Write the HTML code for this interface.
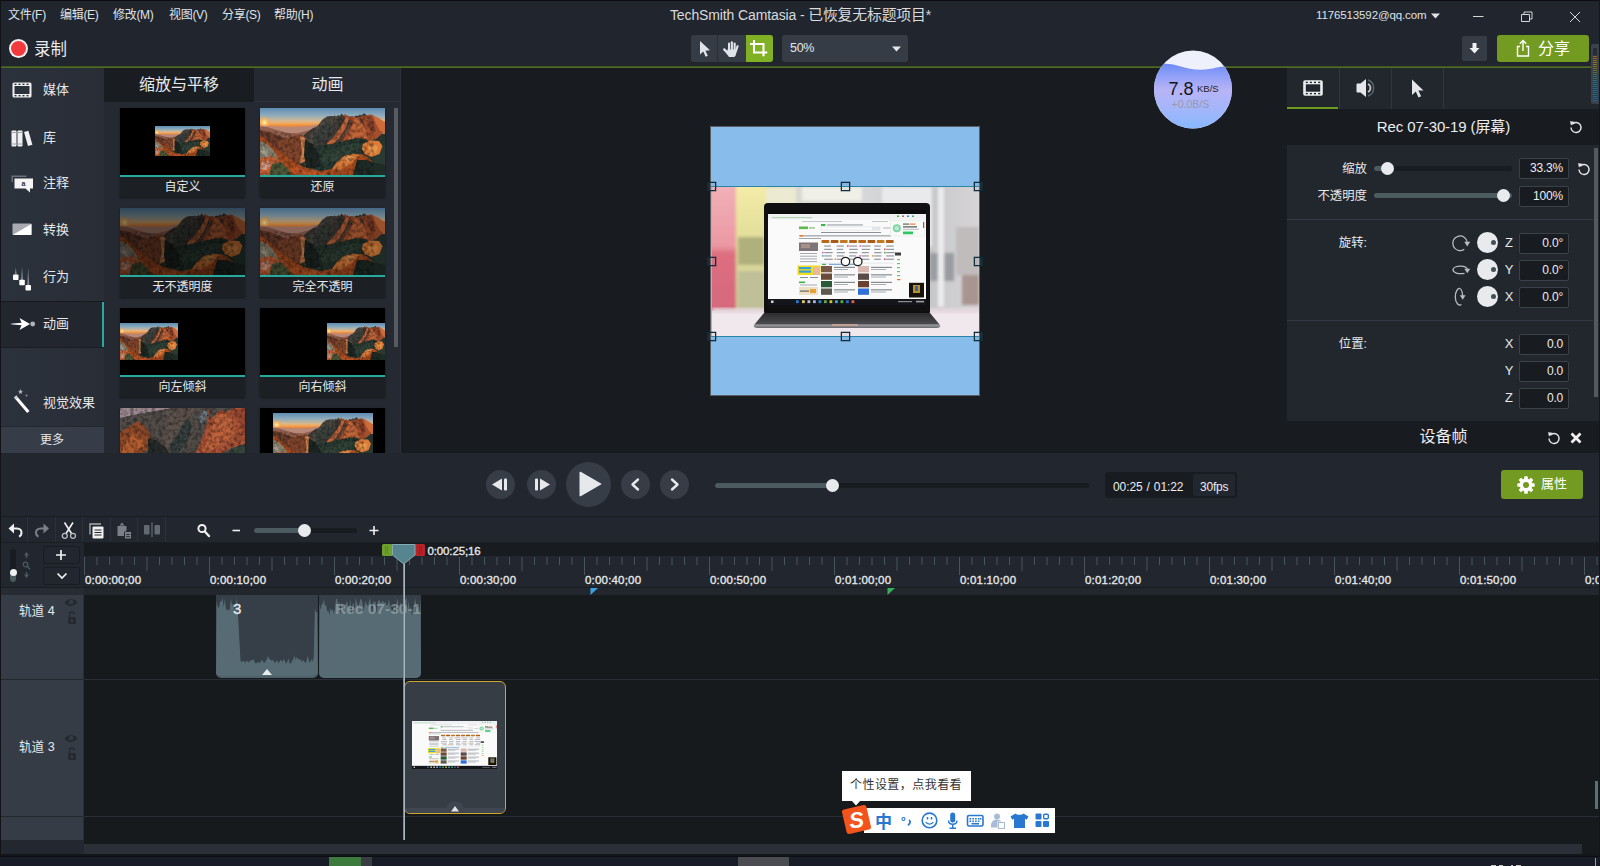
<!DOCTYPE html>
<html lang="zh-CN">
<head>
<meta charset="utf-8">
<title>TechSmith Camtasia - 已恢复无标题项目*</title>
<style>
*{box-sizing:border-box;margin:0;padding:0}
html,body{width:1600px;height:866px;overflow:hidden;background:#21252e}
body{position:relative;font-family:"Liberation Sans","Noto Sans CJK SC",sans-serif;color:#e4e6e8;font-size:13px}
.abs{position:absolute}
#app{position:absolute;left:0;top:0;width:1600px;height:866px;overflow:hidden;background:#21252e}
/* top */
#topbar{left:0;top:0;width:1600px;height:66px;background:#21252e;border-top:1px solid #0b0d10}
#greenline{left:0;top:66px;width:1600px;height:2px;background:linear-gradient(180deg,#40561f 0,#40561f 50%,#506c24 50%,#506c24 100%)}
.menu{top:6px;font-size:12px;color:#dfe2e5;white-space:nowrap;line-height:16px;letter-spacing:-.3px}
#title{left:0;width:1601px;text-align:center;top:4.500px;font-size:14px;color:#d8dbde;line-height:18px;letter-spacing:-.12px}
/* sidebar */
#sidebar{left:0;top:68px;width:104px;height:385px;background:linear-gradient(90deg,#2c323c,#282d36)}
.sitem{left:0;width:104px;height:46px;}
.sitem span{position:absolute;left:43px;top:14px;font-size:13px;line-height:18px;color:#e6e8ea;white-space:nowrap}

#email{left:1316px;top:6px;font-size:11.500px;line-height:16px;color:#dfe2e5;letter-spacing:-0.12px}
.sact{background:#22262e;border-top:1px solid #15181c;border-bottom:1px solid #1a1d23}
.sact:after{content:"";position:absolute;right:0;top:0;width:2px;height:100%;background:#27a99b}
.ico{position:absolute;left:10px;top:11px}
/* panel */
#panel{left:104px;top:68px;width:297px;height:385px;background:#252a32}
.tab{top:0;height:34px;font-size:16px;line-height:34px;text-align:center;color:#e6e8ea}
.card{width:125px;height:89px;background:#1c2025;box-shadow:0 1px 2px rgba(0,0,0,.5)}
.card .img{position:absolute;left:0;top:0;width:125px;height:67px;background:#000;overflow:hidden}
.card .tl{position:absolute;left:0;top:67px;width:125px;height:2px;background:#27a99b}
.card .lb{position:absolute;left:0;top:69px;width:125px;height:20px;text-align:center;font-size:12px;line-height:21px;color:#e6e8ea}
/* canvas */
#canvas{left:401px;top:68px;width:886px;height:385px;background:#181b1f}

.hd{width:9px;height:9px;border:1px solid #0f2e3c;background:rgba(120,150,165,.12);box-shadow:0 0 0 .5px rgba(10,30,40,.5)}
/* props */
#props{left:1287px;top:68px;width:313px;height:385px;background:#22272e}

.plabel{left:0;width:80px;text-align:right;font-size:12.400px;line-height:20px;color:#e6e8ea}
.ibox{left:232px;width:50px;height:21px;background:#181b1f;border:1px solid #3a4149;border-radius:2px;text-align:right;padding-right:5px;font-size:12px;line-height:19px;color:#ecedf0;letter-spacing:-.2px}
.axis{left:214px;width:16px;text-align:center;font-size:13px;line-height:20px;color:#e6e8ea}
/* playback */
#play{left:0;top:453px;width:1600px;height:64px;background:#22262f}
/* timeline */
#tl{left:0;top:517px;width:1600px;height:340px;background:#161a1d}

.vs{top:0;width:1px;height:26px;background:#2c3139}
.rl{top:53px;font-size:11.500px;line-height:20px;color:#e6e8ea;white-space:nowrap;letter-spacing:.19px;font-weight:normal;color:#e4e6e8;-webkit-text-stroke:.35px #e4e6e8}
.tn{left:19px;font-size:12.600px;line-height:20px;color:#e6e8ea;white-space:nowrap}
</style>
</head>
<body>
<div id="app">

<div id="topbar" class="abs">
  <div class="menu abs" style="left:8px">文件(F)</div>
  <div class="menu abs" style="left:60px">编辑(E)</div>
  <div class="menu abs" style="left:113px">修改(M)</div>
  <div class="menu abs" style="left:169px">视图(V)</div>
  <div class="menu abs" style="left:222px">分享(S)</div>
  <div class="menu abs" style="left:274px">帮助(H)</div>
  <div id="title" class="abs">TechSmith Camtasia - <span style="font-size:14.800px">已恢复无标题项目</span>*</div>
  <div class="abs" id="email">1176513592@qq.com</div>
  <svg class="abs" style="left:1431px;top:12px" width="9" height="6" viewBox="0 0 9 6"><path d="M0 0.5h9L4.5 5.5z" fill="#dfe2e5"/></svg>
  <svg class="abs" style="left:1470px;top:6px" width="120" height="18" viewBox="0 0 120 18" fill="none" stroke="#d4d7da" stroke-width="1">
    <path d="M3 9.5h10.5"/>
    <path d="M51.5 7.5h8v7h-8z"/><path d="M54 7.5v-2.500h8v7h-2.500"/>
    <path d="M100 5l10 10M110 5l-10 10"/>
  </svg>
  <!-- record -->
  <div class="abs" style="left:9px;top:38px;width:19px;height:19px;border-radius:50%;background:#f0f0f0"></div>
  <div class="abs" style="left:11px;top:40px;width:15px;height:15px;border-radius:50%;background:#f23a3c"></div>
  <div class="abs" style="left:34px;top:37px;font-size:16.500px;line-height:22px;color:#e8eaec">录制</div>
  <!-- tools -->
  <div class="abs" style="left:691px;top:34px;width:82px;height:27px;background:#363c46;border-radius:3px;overflow:hidden">
    <div class="abs" style="left:26px;top:0;width:1px;height:27px;background:#2a2f38"></div>
    <div class="abs" style="left:55px;top:0;width:27px;height:27px;background:#80b024"></div>
    <svg class="abs" style="left:0;top:0" width="82" height="27" viewBox="0 0 82 27">
      <path d="M9 6v13.600l3.300-3 2.300 5.200 2.200-1-2.300-5.100 4.500-.4z" fill="#dfe3ea"/>
      <g fill="#dfe3ea" stroke="#dfe3ea" stroke-linecap="round">
        <rect x="37" y="7.600" width="2.100" height="9" rx="1.050" stroke="none"/>
        <rect x="39.800" y="6.200" width="2.100" height="10" rx="1.050" stroke="none"/>
        <rect x="42.600" y="7.400" width="2.100" height="9" rx="1.050" stroke="none"/>
        <path d="M46.600 11.200L44.800 16.500" stroke-width="2.100" fill="none"/>
        <path d="M33.200 14.400L37.200 18.600" stroke-width="2.300" fill="none"/>
        <path d="M36.400 14.500h9.600l-1 4.700c-.5 1.800-1.300 2.800-2 2.800h-4.700c-1-.6-1.900-1.900-2.400-3.500z" stroke="none"/>
      </g>
      <path d="M63 5v12.500h13.300M59 9h13.500v12.300" fill="none" stroke="#fff" stroke-width="2.100"/>
    </svg>
  </div>
  <div class="abs" style="left:782px;top:34px;width:126px;height:27px;background:#363c46;border-radius:3px">
    <div class="abs" style="left:8px;top:0;font-size:12.500px;line-height:27px;color:#e4e6e8;letter-spacing:-.3px">50%</div>
    <svg class="abs" style="left:110px;top:11px" width="9" height="6" viewBox="0 0 9 6"><path d="M0 0.500h9L4.500 5.500z" fill="#e4e6e8"/></svg>
  </div>
  <!-- download + share -->
  <div class="abs" style="left:1462px;top:35px;width:25px;height:25px;background:#363c46;border-radius:2px">
    <svg class="abs" style="left:6px;top:6px" width="13" height="13" viewBox="0 0 13 13"><path d="M4.500 1h4v5h3L6.500 11.500 1.500 6h3z" fill="#f0f0f0"/></svg>
  </div>
  <div class="abs" style="left:1497px;top:34px;width:92px;height:27px;background:#739b22;border-radius:3px">
    <svg class="abs" style="left:18px;top:4px" width="16" height="19" viewBox="0 0 16 19" fill="none" stroke="#fff" stroke-width="1.400"><path d="M5 7.500H2.500v9.500h11V7.500H11"/><path d="M8 12V2M4.800 4.800L8 1.600l3.200 3.200"/></svg>
    <div class="abs" style="left:41px;top:2.5px;font-size:16px;line-height:22px;color:#fff">分享</div>
  </div>
</div>

<div id="greenline" class="abs"></div>

<div id="sidebar" class="abs">
  <div class="sitem abs" style="top:-1px"><svg class="ico" style="left:12px;top:15px" width="20" height="16" viewBox="0 0 20 16"><rect x=".5" y=".5" width="19" height="15" rx="1.500" fill="#f0f0f0"/><rect x="2.500" y="4" width="15" height="8" fill="#2b313b"/><g fill="#2b313b"><rect x="2.500" y="1.600" width="2" height="1.400"/><rect x="6.500" y="1.600" width="2" height="1.400"/><rect x="10.500" y="1.600" width="2" height="1.400"/><rect x="14.500" y="1.600" width="2" height="1.400"/><rect x="2.500" y="13" width="2" height="1.400"/><rect x="6.500" y="13" width="2" height="1.400"/><rect x="10.500" y="13" width="2" height="1.400"/><rect x="14.500" y="13" width="2" height="1.400"/></g></svg><span>媒体</span></div>
  <div class="sitem abs" style="top:46.5px"><svg class="ico" style="left:11px;top:15px" width="22" height="17" viewBox="0 0 22 17" fill="#f0f0f0"><rect x=".5" y=".5" width="5" height="16" rx="1"/><rect x="6.500" y=".5" width="5" height="16" rx="1"/><path d="M13 2l4.400-1.300 4 14-4.400 1.300z"/><g fill="#a0a4aa"><rect x=".5" y="13.500" width="5" height="1"/><rect x="6.500" y="13.500" width="5" height="1"/><rect x=".5" y="2" width="5" height="1"/><rect x="6.500" y="2" width="5" height="1"/></g></svg><span>库</span></div>
  <div class="sitem abs" style="top:92px"><svg class="ico" style="left:11px;top:15px" width="24" height="18" viewBox="0 0 24 18"><path d="M.5 7V.5h15V2H2v5z" fill="#6a707a"/><path d="M3.500 3.500h18.500v10h-3v4l-4.500-4H3.500z" fill="#f4f4f4"/><text x="12.500" y="11.300" font-size="7" font-weight="bold" font-family="Liberation Sans,sans-serif" text-anchor="middle" fill="#2b313b">a</text></svg><span>注释</span></div>
  <div class="sitem abs" style="top:139px"><svg class="ico" style="left:12px;top:16px" width="20" height="13" viewBox="0 0 20 13"><rect x=".5" y=".5" width="19" height="11.500" rx="1" fill="#a8acb2"/><path d="M19.500 1v11h-19z" fill="#fff"/></svg><span>转换</span></div>
  <div class="sitem abs" style="top:186px"><svg class="ico" style="left:12px;top:12px" width="20" height="26" viewBox="0 0 20 26"><path d="M2.800 8.500l1-7 1 7zM9 14l1-13 1 13zM15.200 19l1-17.500 1 17.500z" fill="#808690"/><rect x="1" y="8.500" width="5.500" height="5.500" rx=".8" fill="#fff"/><rect x="7.300" y="13.700" width="5.500" height="5.500" rx=".8" fill="#fff"/><rect x="13.500" y="19" width="5.500" height="5.500" rx=".8" fill="#fff"/></svg><span>行为</span></div>
  <div class="sitem sact abs" style="top:233px;height:47px"><svg class="ico" style="left:9px;top:13px" width="27" height="18" viewBox="0 0 27 18"><path d="M1 9c4-.8 8-.8 11.500-1.200L10.500 3l10.500 6-10.500 6 2-4.800C9 9.800 5 9.800 1 9z" fill="#fff"/><circle cx="23.700" cy="9" r="2.400" fill="#b0b4ba"/></svg><span style="top:13px">动画</span></div>
  <div class="sitem abs" style="top:312px"><svg class="ico" style="left:11px;top:8px" width="26" height="30" viewBox="0 0 26 30"><path d="M3 9.500l2.300-1.900L18.500 23l-2.300 1.900z" fill="#fff"/><path d="M3 9.500l2.300-1.900 1.800 2.100-2.300 1.900z" fill="#c8ccd2"/><path d="M9.500 1l.7 1.700 1.800.2-1.300 1.200.4 1.800-1.600-.9-1.600.9.400-1.800L7 2.900l1.800-.2z" fill="#b0b4ba"/><circle cx="15.500" cy="7.500" r="1" fill="#8c929a"/></svg><span>视觉效果</span></div>
  <div class="abs" style="left:0;top:358px;width:104px;height:27px;background:#363d48;border-top:1px solid #23272e;text-align:center;font-size:12px;line-height:26px;color:#e6e8ea">更多</div>
</div>


<svg width="0" height="0" style="position:absolute">
<defs>
  <linearGradient id="sky" x1="0" y1="0" x2="0" y2="1">
    <stop offset="0" stop-color="#5c8cb4"/><stop offset=".3" stop-color="#93aebb"/><stop offset=".5" stop-color="#d8b890"/><stop offset=".6" stop-color="#f2a85c"/><stop offset=".68" stop-color="#ee8a3c"/><stop offset=".8" stop-color="#c08068"/><stop offset="1" stop-color="#a87868"/>
  </linearGradient>
  <radialGradient id="sun" cx=".5" cy=".5" r=".5"><stop offset="0" stop-color="#fff8d8"/><stop offset=".25" stop-color="#ffd070"/><stop offset="1" stop-color="#f09040" stop-opacity="0"/></radialGradient>
  <filter id="tex" x="0" y="0" width="100%" height="100%"><feTurbulence type="fractalNoise" baseFrequency=".28" numOctaves="3" seed="4" result="n"/><feColorMatrix in="n" type="matrix" values="0 0 0 0 0  0 0 0 0 0  0 0 0 0 0  2.200 0 0 0 -.85"/></filter><filter id="b1" x="-5%" y="-5%" width="110%" height="110%"><feGaussianBlur stdDeviation=".7"/></filter>
  <symbol id="page" viewBox="56 27 158 91" preserveAspectRatio="none"><rect x="56" y="27" width="158" height="86" fill="#fafafa"/><rect x="56" y="112" width="158" height="6" fill="#14161c"/>
      <rect x="56" y="27" width="158" height="5.500" fill="#eef0f2"/>
      <rect x="60" y="30" width="40" height="1.200" fill="#b0d8b8"/><rect x="185" y="28.500" width="2" height="1.500" fill="#40b060"/><rect x="190" y="28.500" width="2" height="1.500" fill="#e05050"/><rect x="195" y="28.500" width="2" height="1.500" fill="#4080e0"/><rect x="200" y="28.500" width="2" height="1.500" fill="#40b060"/>
      <rect x="90" y="34" width="40" height="1" fill="#c4c8cc"/><rect x="160" y="34" width="16" height="1" fill="#c4c8cc"/>
      <rect x="87" y="39.500" width="9" height="2.600" fill="#5cba4a"/><rect x="97" y="40" width="6" height="1.800" fill="#a8d0a0"/>
      <rect x="109" y="37" width="4.500" height="2" fill="#39b54a"/><rect x="115" y="37.400" width="36" height="1.100" fill="#9aa0a8"/>
      <rect x="109" y="40" width="52" height="3" fill="#fff" stroke="#d0d4d8" stroke-width=".5"/><rect x="161" y="40" width="7" height="3" fill="#e8eaec" stroke="#c8ccd0" stroke-width=".4"/><rect x="171" y="40.500" width="8" height="1" fill="#b0b4b8"/>
      <rect x="109" y="45" width="60" height="1" fill="#8a9098"/>
      <rect x="87" y="48.300" width="92" height="1.100" fill="#90969e"/><rect x="88" y="48" width="3" height="1.600" fill="#e88030"/>
      <rect x="87" y="51" width="22" height="1" fill="#a0a6ac"/>
      <rect x="109.5" y="53" width="7.800" height="3" rx=".8" fill="#b86a1a"/><rect x="118.7" y="53" width="7.800" height="3" rx=".8" fill="#a85a18"/><rect x="127.9" y="53" width="7.800" height="3" rx=".8" fill="#c07a22"/><rect x="137.1" y="53" width="7.800" height="3" rx=".8" fill="#b06018"/><rect x="146.3" y="53" width="7.800" height="3" rx=".8" fill="#b86a1a"/><rect x="155.5" y="53" width="7.800" height="3" rx=".8" fill="#a85a18"/><rect x="164.7" y="53" width="7.800" height="3" rx=".8" fill="#c07a22"/><rect x="173.9" y="53" width="7.800" height="3" rx=".8" fill="#b06018"/>
      <rect x="87" y="55.500" width="19" height="8.500" fill="#7e7478"/><rect x="89" y="57" width="9" height="4" fill="#a89088"/>
      <g fill="#a4aab0"><rect x="88" y="66" width="17" height="1"/><rect x="88" y="68.700" width="17" height="1"/><rect x="88" y="71.400" width="17" height="1"/><rect x="88" y="74.100" width="17" height="1"/></g>
      <rect x="112.2" y="58.5" width="6.7" height="1.100" fill="#8a9098"/><rect x="124.7" y="58.5" width="7.1" height="1.100" fill="#8a9098"/><rect x="137.2" y="58.5" width="7.9" height="1.100" fill="#8a9098"/><rect x="135" y="58.2" width="1.600" height="1.600" fill="#e85050"/><rect x="149.7" y="58.5" width="8.7" height="1.100" fill="#8a9098"/><rect x="147.5" y="58.2" width="1.600" height="1.600" fill="#e060c0"/><rect x="162.2" y="58.5" width="6.7" height="1.100" fill="#8a9098"/><rect x="174.2" y="58.5" width="7.4" height="1.100" fill="#8a9098"/><rect x="112.2" y="61.8" width="7.4" height="1.100" fill="#8a9098"/><rect x="124.7" y="61.8" width="6.5" height="1.100" fill="#8a9098"/><rect x="137.2" y="61.8" width="8.6" height="1.100" fill="#8a9098"/><rect x="149.7" y="61.8" width="8.2" height="1.100" fill="#8a9098"/><rect x="162.2" y="61.8" width="6.2" height="1.100" fill="#8a9098"/><rect x="174.2" y="61.8" width="7.8" height="1.100" fill="#8a9098"/><rect x="172" y="61.5" width="1.600" height="1.600" fill="#e85050"/><rect x="112.2" y="65.1" width="8.5" height="1.100" fill="#8a9098"/><rect x="110" y="64.8" width="1.600" height="1.600" fill="#e060c0"/><rect x="124.7" y="65.1" width="8.2" height="1.100" fill="#8a9098"/><rect x="137.2" y="65.1" width="8.1" height="1.100" fill="#8a9098"/><rect x="149.7" y="65.1" width="7.2" height="1.100" fill="#8a9098"/><rect x="162.2" y="65.1" width="7.3" height="1.100" fill="#8a9098"/><rect x="174.2" y="65.1" width="8.6" height="1.100" fill="#8a9098"/><rect x="172" y="64.8" width="1.600" height="1.600" fill="#50b050"/><rect x="112.2" y="68.4" width="7.5" height="1.100" fill="#8a9098"/><rect x="110" y="68.10000000000001" width="1.600" height="1.600" fill="#40b0c0"/><rect x="124.7" y="68.4" width="7.3" height="1.100" fill="#8a9098"/><rect x="137.2" y="68.4" width="6.9" height="1.100" fill="#8a9098"/><rect x="149.7" y="68.4" width="7.2" height="1.100" fill="#8a9098"/><rect x="147.5" y="68.10000000000001" width="1.600" height="1.600" fill="#e060c0"/><rect x="162.2" y="68.4" width="7.2" height="1.100" fill="#8a9098"/><rect x="160" y="68.10000000000001" width="1.600" height="1.600" fill="#e8a030"/><rect x="174.2" y="68.4" width="8.0" height="1.100" fill="#8a9098"/><rect x="112.2" y="71.7" width="8.6" height="1.100" fill="#8a9098"/><rect x="124.7" y="71.7" width="8.0" height="1.100" fill="#8a9098"/><rect x="122.5" y="71.4" width="1.600" height="1.600" fill="#e8a030"/><rect x="137.2" y="71.7" width="8.9" height="1.100" fill="#8a9098"/><rect x="149.7" y="71.7" width="7.7" height="1.100" fill="#8a9098"/><rect x="162.2" y="71.7" width="6.6" height="1.100" fill="#8a9098"/><rect x="174.2" y="71.7" width="7.7" height="1.100" fill="#8a9098"/><rect x="172" y="71.4" width="1.600" height="1.600" fill="#e85050"/>
      <rect x="108" y="75.800" width="74" height=".6" fill="#d8dce0"/><rect x="110" y="76.800" width="4" height="1.200" fill="#39b54a"/><rect x="117" y="76.800" width="26" height="1.100" fill="#70a0d8"/>
      <rect x="109" y="79" width="11" height="6.300" fill="#7a5a48"/><rect x="146" y="79" width="11" height="6.300" fill="#d8b8b0"/><rect x="122" y="79.8" width="21" height="1.100" fill="#7a8088"/><rect x="122" y="82" width="14" height="1" fill="#a8aeb4"/><rect x="159" y="79.8" width="21" height="1.100" fill="#7a8088"/><rect x="159" y="82" width="15" height="1" fill="#a8aeb4"/><rect x="109" y="86.5" width="11" height="6.300" fill="#6a4a38"/><rect x="146" y="86.5" width="11" height="6.300" fill="#5a4a48"/><rect x="122" y="87.3" width="21" height="1.100" fill="#7a8088"/><rect x="122" y="89.5" width="14" height="1" fill="#a8aeb4"/><rect x="159" y="87.3" width="21" height="1.100" fill="#7a8088"/><rect x="159" y="89.5" width="15" height="1" fill="#a8aeb4"/><rect x="109" y="94" width="11" height="6.300" fill="#2a5a38"/><rect x="146" y="94" width="11" height="6.300" fill="#6a4030"/><rect x="122" y="94.8" width="21" height="1.100" fill="#7a8088"/><rect x="122" y="97" width="14" height="1" fill="#a8aeb4"/><rect x="159" y="94.8" width="21" height="1.100" fill="#7a8088"/><rect x="159" y="97" width="15" height="1" fill="#a8aeb4"/><rect x="109" y="101.5" width="11" height="6.300" fill="#5a5a50"/><rect x="146" y="101.5" width="11" height="6.300" fill="#3070d8"/><rect x="122" y="102.3" width="21" height="1.100" fill="#7a8088"/><rect x="122" y="104.5" width="14" height="1" fill="#a8aeb4"/><rect x="159" y="102.3" width="21" height="1.100" fill="#7a8088"/><rect x="159" y="104.5" width="15" height="1" fill="#a8aeb4"/>
      <rect x="85.500" y="78.500" width="23" height="9.500" fill="#f0dc20"/><rect x="87" y="80" width="12" height="2.200" fill="#38a0d8"/><rect x="87" y="83.500" width="12" height="2.200" fill="#38a0d8"/><rect x="101" y="80" width="7" height="8" fill="#e8b8a0"/>
      <rect x="88" y="90" width="8" height="1" fill="#8a9098"/><rect x="98" y="90" width="8" height="1" fill="#8a9098"/>
      <rect x="87" y="94.500" width="6" height="1.600" fill="#39b54a"/><rect x="88" y="97.500" width="17" height="1" fill="#a4aab0"/>
      <rect x="87" y="100" width="19" height="8" fill="#ece0c8"/><rect x="98" y="102" width="6" height="4" fill="#e8a030"/><rect x="88" y="103.500" width="9" height="1.200" fill="#6a6058"/>
      <rect x="178.500" y="33.500" width="34" height="15.500" fill="#f8faf8" stroke="#e0e4e0" stroke-width=".5"/><circle cx="184.800" cy="41.300" r="4" fill="#7fd4a4"/><circle cx="184.800" cy="41.300" r="2.200" fill="#b8ecd0"/><rect x="191" y="44.500" width="10" height="2.800" rx=".5" fill="#2ec462"/><rect x="191" y="36.500" width="6" height="1.200" fill="#606468"/><rect x="197.500" y="36.500" width="6" height="1.200" fill="#f08030"/><rect x="191" y="39.300" width="14" height="1.200" fill="#50545a"/><rect x="191" y="41.800" width="16" height="1" fill="#b8bcc0"/>
      <rect x="211" y="35" width="1.200" height="6" fill="#d84040"/>
      <rect x="197" y="95.800" width="15" height="14.700" fill="#15130c"/><rect x="201" y="98" width="7" height="8" fill="#b89428"/><rect x="203" y="99" width="3" height="5" fill="#3860b8"/>
      <rect x="183" y="65.500" width="6" height="3" fill="#3a3c40"/>
      <g fill="#6cc070"><rect x="185" y="72" width="3" height="1.200"/><rect x="185" y="76" width="3" height="1.200"/><rect x="185" y="80" width="3" height="1.200"/><rect x="185" y="84" width="3" height="1.200"/><rect x="185" y="88" width="3" height="1.200"/></g><rect x="185" y="92" width="3.500" height="1.200" fill="#f07030"/>
      <g><rect x="59" y="113.500" width="2.500" height="2.500" fill="#d0d4d8"/><rect x="84" y="113.300" width="2.800" height="2.800" fill="#2878d8"/><rect x="90" y="113.300" width="2.800" height="2.800" fill="#e8c860"/><rect x="95.500" y="113.300" width="2.800" height="2.800" fill="#c0c4c8"/><rect x="101" y="113.300" width="2.800" height="2.800" fill="#a8b8e8"/><rect x="106.500" y="113.300" width="2.800" height="2.800" fill="#2888c8"/><rect x="112" y="113.300" width="2.800" height="2.800" fill="#60b048"/><rect x="117.500" y="113.300" width="2.800" height="2.800" fill="#d8c040"/><rect x="123" y="113.300" width="2.800" height="2.800" fill="#40a8d8"/><rect x="128.500" y="113.300" width="2.800" height="2.800" fill="#48b838"/><rect x="134" y="113.300" width="2.800" height="2.800" fill="#2868c8"/><rect x="139.500" y="113.300" width="2.800" height="2.800" fill="#e86040"/><rect x="186" y="114" width="14" height="1.200" fill="#8a8e94"/><rect x="204" y="113.800" width="8" height="1.600" fill="#9a9ea4"/></g>
    </symbol>
  <symbol id="mtn" viewBox="0 0 125 67" preserveAspectRatio="none">
    <clipPath id="mclip"><path d="M44 27l5-4 4-3 4-1.500 3-2.500 3-4 2-1 2-2.500 2 .5 2-1 2 1 1.500-1.500 2 1 2-1.500 1.500 1 1.500-2.500 2 2.500 2 .5 2-1 2 1.500 2.500-1 2 1 2-1.500 2 .5 2-1.500 1.500 1 2-2 2 .5 1.500 2 2 .5 3 2.500 2.500 1V67H0V21l20 3 24 3z"/></clipPath>
    <rect width="125" height="67" fill="#26332d"/>
    <rect width="125" height="26" fill="url(#sky)"/>
    <circle cx="4.500" cy="14.500" r="7" fill="url(#sun)"/>
    <path d="M0 17.500l10 .8 12 .7 14 0 12-.5 10-2v14H0z" fill="#b88878"/>
    <path d="M0 18.500l8 .8 10 3 10 2.700 10 0 12-3 8-3v16H0z" fill="#94604e"/>
    <path d="M0 22l10 2 12 5 12 2 12-4v20H0z" fill="#6a3c2c"/>
    <!-- main range -->
    <path d="M44 27l5-4 4-3 4-1.500 3-2.500 3-4 2-1 2-2.500 2 .5 2-1 2 1 1.500-1.500 2 1 2-1.500 1.500 1 1.500-2.500 2 2.500 2 .5 2-1 2 1.500 2.500-1 2 1 2-1.500 2 .5 2-1.500 1.500 1 2-2 2 .5 1.500 2 2 .5 3 2.500 2.500 1V57H44z" fill="#403d38"/>
    <path d="M62 12l4-3 4-1 4 0 4 1-6 9-8 10-9 8-6 1-3-5 7-8z" fill="#4c4842"/>
    <path d="M58 22l8-8 6 6-6 10-10 8-4-6z" fill="#3c423d"/>
    <path d="M82 8l3.500-2 2 2.500 4 0 4 .5 4.500 0 4-1 3.500-1 4-.5 3.500 2 5 3.500 3 1v12l-7 6-11 3-12 5-14 5-6-1 8-9 8-12 2-9z" fill="#a44e2c"/>
    <path d="M86 9l3 1.500-3 9-7 11-9 8-5-1 9-9 7-10z" fill="#c0643a"/>
    <path d="M95 10l6 4 5 8 1 9-6-2-7 2-7 5 3-11z" fill="#c2663a"/>
    <path d="M99 9.500l4 1.500 2 8-4-5z" fill="#5a4034"/>
    <path d="M90 12l3 1-4 10-6 8-3 0 6-9z" fill="#6a4434"/>
    <path d="M107 9l4-1.500 2 6 3 9-4 3-4-8z" fill="#84402a"/>
    <path d="M113 7.500l5 2 5 3.500 2 .5v12l-5-3-4-7z" fill="#cc6c3a"/>
    <!-- valley -->
    <path d="M52 40l8-3 12-1 12-3 12-3 10 1 6 5 13 2v29H48z" fill="#293a32"/>
    <path d="M60 44l16-4 18-5 8 2-10 8-16 8-14 2z" fill="#324439"/>
    <path d="M103 36l7-3.500 9 .5 3.500 5-3 8-8 3-7-3-2.500-5z" fill="#dc7c38"/>
    <path d="M108 38l6-2 4 3-2 6-6 1z" fill="#e89448"/>
    <!-- left slopes -->
    <path d="M18 34l10-4 9-3 7 1 3 9-2 11-7 8-8 1-9-7z" fill="#82462c"/>
    <path d="M40 27.500l6 3 2.500 10-3.500 13-6 3 3-13z" fill="#d08450"/>
    <path d="M45 31l7 5 6 9 3 13-14 3-3-14z" fill="#1d2622"/>
    <path d="M0 28l8 5 10 9 12 9 14 8 16 4 12-2 10-7 8-6 11-2 7 3 5 5 6 4 6 2v7H0z" fill="#a84c20"/>
    <path d="M76 55l8-7 10-2.500 6 1.500-8 8-12 7-8-1z" fill="#da7a3a"/>
    <path d="M84 50l6-2 4 1-6 5z" fill="#f0a058"/>
    <path d="M97 52l9 0 10 3 9 2v10H93z" fill="#1f2c26"/>
    <path d="M0 33l6 2 8 8 5 9-5 6-14 3z" fill="#86806e"/>
    <path d="M2 38l5 2 3 6-4 4-6-2z" fill="#a09a88"/>
    <path d="M0 50l12-2 10 6 6 10v3H0z" fill="#c46238"/>
    <path d="M12 56l9-2 8 8 2 5H9z" fill="#4c5838"/>
    <path d="M30 57l12 4 14 2 10 4H33z" fill="#be5626"/>
    <path d="M2 54l6-1 3 5-5 4-6-1z" fill="#d89a80"/>
    <g clip-path="url(#mclip)"><rect width="125" height="67" fill="#000" filter="url(#tex)" opacity=".42"/></g>
  </symbol>
  <symbol id="mtz" viewBox="0 0 125 67" preserveAspectRatio="none">
    <rect width="125" height="67" fill="#474542"/>
    <path d="M0 0h52L30 4 14 7 0 10z" fill="#9c8890"/>
    <path d="M0 10l14-3 16-3 10-1 12-3h30l8 6 6-6h29v45H0z" fill="#524d49"/>
    <path d="M46 2l10-2h20l-6 14-10 16-10 12-8-6 4-18z" fill="#5e524c"/>
    <path d="M0 24l10-6 8-5 6 4 6 8 4 10-4 8-6 0-4 8-6 14H0z" fill="#8e4a2a"/>
    <path d="M4 34l10-8 8 4 2 8-10 6-6 10-8 2z" fill="#b45e30"/>
    <path d="M28 30l8 2 10 8 6 10-4 8-10 4-12-6 2-12z" fill="#262c2a"/>
    <path d="M50 36l8-10 6-12 4-4 4 8-4 14-8 12-8 4z" fill="#36403e"/>
    <path d="M86 0l4 4-4 8 6-2 8-8 6 2 8-4h11v36l-14 4-16 10-18 8-12 0 12-16 8-20 4-14z" fill="#a85236"/>
    <path d="M96 8l10-4 6 8 4 12-10 10-14 8-10 2 8-16z" fill="#be623c"/>
    <path d="M116 2l9-2v22l-6-8z" fill="#964630"/>
    <path d="M84 2l4 2-3 8-4 4-2-6z" fill="#6e7a84"/>
    <path d="M125 36l-12 4-14 10-16 8-12 2-6 7h60z" fill="#36463c"/>
    <path d="M0 52l10-6 8 2 6 12-4 7H0z" fill="#a85430"/>
    <path d="M24 52l12 6 14 2 12-2 4 9H22z" fill="#2e3334"/>
    <rect width="125" height="67" fill="#000" filter="url(#tex)" opacity=".45"/>
  </symbol>
</defs>
</svg>

<div id="panel" class="abs">
  <div class="tab abs" style="left:0;width:150px;background:#191d21">缩放与平移</div>
  <div class="tab abs" style="left:150px;width:147px;border-bottom:1px solid #2d323a">动画</div>
  <div class="abs" style="left:0;top:34px;width:297px;height:351px;overflow:hidden">
    <div class="abs" style="left:0;top:-34px;width:297px;height:400px"><div class="card abs" style="left:16px;top:40px"><div class="img"><svg class="abs" style="left:35px;top:18px;" width="55" height="30"><use href="#mtn" width="55" height="30"/></svg></div><div class="tl"></div><div class="lb">自定义</div></div><div class="card abs" style="left:156px;top:40px"><div class="img"><svg class="abs" style="left:0px;top:0px;" width="125" height="67"><use href="#mtn" width="125" height="67"/></svg></div><div class="tl"></div><div class="lb">还原</div></div><div class="card abs" style="left:16px;top:140px"><div class="img"><svg class="abs" style="left:0px;top:0px;filter:brightness(.5)" width="125" height="67"><use href="#mtn" width="125" height="67"/></svg></div><div class="tl"></div><div class="lb">无不透明度</div></div><div class="card abs" style="left:156px;top:140px"><div class="img"><svg class="abs" style="left:0px;top:0px;filter:brightness(.75)" width="125" height="67"><use href="#mtn" width="125" height="67"/></svg></div><div class="tl"></div><div class="lb">完全不透明</div></div><div class="card abs" style="left:16px;top:240px"><div class="img"><svg class="abs" style="left:0px;top:14.500px;" width="58" height="37.500"><use href="#mtn" width="58" height="37.500"/></svg></div><div class="tl"></div><div class="lb">向左倾斜</div></div><div class="card abs" style="left:156px;top:240px"><div class="img"><svg class="abs" style="left:67px;top:14.500px;" width="58" height="37.500"><use href="#mtn" width="58" height="37.500"/></svg></div><div class="tl"></div><div class="lb">向右倾斜</div></div><div class="card abs" style="left:16px;top:340px"><div class="img"><svg class="abs" style="left:0;top:0" width="125" height="67"><use href="#mtz" width="125" height="67"/></svg></div><div class="tl"></div><div class="lb"></div></div><div class="card abs" style="left:156px;top:340px"><div class="img"><svg class="abs" style="left:12.500px;top:4.500px" width="100" height="54"><use href="#mtn" width="100" height="54"/></svg></div><div class="tl"></div><div class="lb"></div></div></div>
  </div>
  <div class="abs" style="left:290px;top:40px;width:4px;height:239px;background:#565a61"></div>
  <div class="abs" style="left:296px;top:0;width:1px;height:385px;background:#2d323a"></div>
</div>


<div id="canvas" class="abs">
  <div class="abs" style="left:309px;top:58px;width:270px;height:270px;background:#88bceb;border:1px solid #5a5e63"></div>
  <svg class="abs" style="left:311px;top:119px" width="267" height="149" viewBox="0 0 267 149">
    <defs>
      <linearGradient id="bgw" x1="0" y1="0" x2="1" y2="0"><stop offset="0" stop-color="#e9a3ab"/><stop offset=".085" stop-color="#e58f9a"/><stop offset=".095" stop-color="#e0dca0"/><stop offset=".2" stop-color="#cfd09a"/><stop offset=".3" stop-color="#d8d8d0"/><stop offset=".6" stop-color="#d4d6d8"/><stop offset=".8" stop-color="#c4c6c8"/><stop offset="1" stop-color="#d8d4d6"/></linearGradient>
      <linearGradient id="base" x1="0" y1="0" x2="0" y2="1"><stop offset="0" stop-color="#2c2c2e"/><stop offset=".7" stop-color="#4a4a4e"/><stop offset=".8" stop-color="#9a9a9e"/><stop offset="1" stop-color="#6a6a6e"/></linearGradient>
      <filter id="b2"><feGaussianBlur stdDeviation="1.500"/></filter><linearGradient id="pinkv" x1="0" y1="0" x2="0" y2="1"><stop offset="0" stop-color="#f2b2b8"/><stop offset=".4" stop-color="#eb98a2"/><stop offset=".45" stop-color="#dc6e80"/><stop offset="1" stop-color="#d4667a"/></linearGradient><linearGradient id="yelv" x1="0" y1="0" x2="0" y2="1"><stop offset="0" stop-color="#f6eca8"/><stop offset=".3" stop-color="#e4e09c"/><stop offset="1" stop-color="#c4c494"/></linearGradient>
    </defs>
    <rect width="267" height="149" fill="url(#bgw)"/>
    <g filter="url(#b2)">
      <rect x="-4" y="-4" width="28" height="157" fill="url(#pinkv)"/>
      <rect x="24" y="-4" width="30" height="157" fill="url(#yelv)"/>
      <rect x="26" y="50" width="26" height="28" fill="#b0b07c"/>
      <rect x="26" y="84" width="26" height="40" fill="#c0c098"/>
      <rect x="54" y="0" width="30" height="60" fill="#ecead0"/>
      <rect x="90" y="0" width="60" height="14" fill="#f0f0e8"/>
      <rect x="170" y="0" width="50" height="60" fill="#e8eaec"/>
      <rect x="218" y="66" width="24" height="28" fill="#9a9ca0"/>
      <rect x="226" y="0" width="6" height="120" fill="#ececee"/>
      <rect x="244" y="40" width="23" height="48" fill="#c0bcbc"/>
      <rect x="250" y="88" width="17" height="30" fill="#a89490"/>
    </g>
    <rect x="0" y="124" width="267" height="25" fill="#f0e8ec"/>
    <rect x="0" y="121" width="267" height="5" fill="#e4d8dc" filter="url(#b2)"/>
    <!-- laptop -->
    <rect x="52" y="16" width="166" height="112" rx="4" fill="#101012"/>
    <rect x="56" y="27" width="158" height="86" fill="#fafafa"/>
    <rect x="56" y="23" width="158" height="4" fill="#0a0a0a"/>
    <rect x="56" y="112" width="158" height="6" fill="#14161c"/>
    <path d="M52 126h166l10 12c1 2-1 3-3 3H45c-2 0-4-1-3-3z" fill="url(#base)"/>
    <rect x="120" y="137" width="26" height="2" fill="#c0a090"/>
    <!-- web page contents -->
    <use href="#page" x="56" y="27" width="158" height="91"/>
    <circle cx="133.500" cy="74.500" r="4.200" fill="#fff" stroke="#222" stroke-width="1.300"/>
    <circle cx="145.800" cy="74.500" r="4.200" fill="#fff" stroke="#222" stroke-width="1.300"/>
  </svg>
  <div class="abs" style="left:310px;top:118px;width:268px;height:1px;background:#2a86a8"></div>
  <div class="abs" style="left:310px;top:268px;width:268px;height:1px;background:#2a86a8"></div>
  <div class="hd abs" style="left:306px;top:114px"></div><div class="hd abs" style="left:440px;top:114px"></div><div class="hd abs" style="left:573px;top:114px"></div>
  <div class="hd abs" style="left:306px;top:189px"></div><div class="hd abs" style="left:573px;top:189px"></div>
  <div class="hd abs" style="left:306px;top:264px"></div><div class="hd abs" style="left:440px;top:264px"></div><div class="hd abs" style="left:573px;top:264px"></div>
</div>
<!-- network bubble -->
<svg class="abs" style="left:1153px;top:50px" width="80" height="80" viewBox="0 0 80 80">
  <defs>
    <linearGradient id="bub" x1="0" y1="0" x2="0" y2="1"><stop offset="0" stop-color="#6d8af8"/><stop offset=".15" stop-color="#8a9df8"/><stop offset=".4" stop-color="#b8b4f6"/><stop offset=".7" stop-color="#a2b6fb"/><stop offset="1" stop-color="#86b8ff"/></linearGradient>
    <clipPath id="bc"><circle cx="40" cy="39.500" r="39"/></clipPath>
  </defs>
  <circle cx="40" cy="39.500" r="39" fill="#eef0fc"/>
  <path clip-path="url(#bc)" d="M0 16c8-3 16-3 26 0s20 5 30 3 16-3 24-4v65H0z" fill="url(#bub)"/>
  <text x="15.500" y="44.500" font-family="Liberation Sans,sans-serif" font-size="18" fill="#141418">7.8</text>
  <text x="44" y="42" font-family="Liberation Sans,sans-serif" font-size="9.500" fill="#222">KB/S</text>
  <text x="18.500" y="58" font-family="Liberation Sans,sans-serif" font-size="10.500" fill="#9898a8">+0.0B/S</text>
</svg>


<div id="props" class="abs">
  <div class="abs" style="left:0;top:0;width:313px;height:41px;background:#22272e"></div>
  <div class="abs" style="left:52px;top:0;width:1px;height:41px;background:#30353e"></div>
  <div class="abs" style="left:104px;top:0;width:1px;height:41px;background:#30353e"></div>
  <div class="abs" style="left:156px;top:0;width:1px;height:41px;background:#30353e"></div>
  <div class="abs" style="left:0;top:39px;width:51px;height:2px;background:#6c9a1f"></div>
  <svg class="abs" style="left:16px;top:11.500px" width="20" height="16" viewBox="0 0 20 16"><rect x=".2" y=".2" width="19.600" height="15.600" rx="1.800" fill="#ecedf0"/><rect x="2.800" y="4.300" width="14.400" height="7.400" fill="#22272e"/><g fill="#22272e"><rect x="2.800" y="1.700" width="2" height="1.400"/><rect x="6.900" y="1.700" width="2" height="1.400"/><rect x="11" y="1.700" width="2" height="1.400"/><rect x="15.200" y="1.700" width="2" height="1.400"/><rect x="2.800" y="12.900" width="2" height="1.400"/><rect x="6.900" y="12.900" width="2" height="1.400"/><rect x="11" y="12.900" width="2" height="1.400"/><rect x="15.200" y="12.900" width="2" height="1.400"/></g></svg>
  <svg class="abs" style="left:68px;top:9px" width="24" height="22" viewBox="0 0 24 22"><path d="M1.500 7.500c0-.6.400-1 1-1h3L11 2v18l-5.500-4.500h-3c-.6 0-1-.4-1-1z" fill="#e4e6ea"/><path d="M13 7a4.500 4.500 0 0 1 0 8" fill="none" stroke="#c0c3c8" stroke-width="1.800"/><path d="M13 3a8.500 8.500 0 0 1 0 16" fill="none" stroke="#5c626a" stroke-width="1.500"/></svg>
  <svg class="abs" style="left:123px;top:10px" width="16" height="22" viewBox="0 0 16 22"><path d="M2 1.500v15.500l3.800-3.500 2.700 6 2.600-1.200-2.700-5.800h5.100z" fill="#e4e6ea"/></svg>
  <!-- header -->
  <div class="abs" style="left:0;top:41px;width:313px;height:36px;background:#181b1f;text-align:center;font-size:15px;line-height:35px;color:#ecedf0;letter-spacing:-.1px">Rec 07-30-19 (屏幕)</div>
  <svg class="abs" style="left:282px;top:51px" width="14" height="15" viewBox="0 0 14 15"><path d="M3.200 5.200A5 5 0 1 1 2 8.500" fill="none" stroke="#e4e6e8" stroke-width="1.400"/><path d="M1 2.200l4.600.6-3.600 3.600z" fill="#e4e6e8"/></svg>
  <!-- section 1 -->
  <div class="plabel abs" style="top:91px">缩放</div>
  <div class="abs" style="left:87px;top:98px;width:138px;height:5px;border-radius:3px;background:#181b1f"></div>
  <div class="abs" style="left:87px;top:98px;width:14px;height:5px;border-radius:3px;background:#4b5b60"></div>
  <div class="abs" style="left:94px;top:94px;width:13px;height:13px;border-radius:50%;background:#e9eaee"></div>
  <div class="ibox abs" style="top:90px">33.3%</div>
  <svg class="abs" style="left:290px;top:93px" width="14" height="15" viewBox="0 0 14 15"><path d="M3.200 5.200A5 5 0 1 1 2 8.500" fill="none" stroke="#e4e6e8" stroke-width="1.400"/><path d="M1 2.200l4.600.6-3.600 3.600z" fill="#e4e6e8"/></svg>
  <div class="plabel abs" style="top:118px">不透明度</div>
  <div class="abs" style="left:87px;top:125px;width:138px;height:5px;border-radius:3px;background:#4b5b60"></div>
  <div class="abs" style="left:210px;top:121px;width:13px;height:13px;border-radius:50%;background:#e9eaee"></div>
  <div class="ibox abs" style="top:118px">100%</div>
  <div class="abs" style="left:0;top:151px;width:306px;height:1px;background:#343a43"></div>
  <!-- rotation -->
  <div class="plabel abs" style="top:165px">旋转:</div>
  <svg class="abs" style="left:164px;top:164px" width="22" height="21" viewBox="0 0 22 21" fill="none" stroke="#b8bcc2" stroke-width="1.300"><path d="M13.300 17.200A7.300 7.300 0 1 1 16.300 10.500"/><path d="M13.200 9.800h6l-3 4.600z" fill="#b8bcc2" stroke="none"/></svg>
  <svg class="abs" style="left:164px;top:194px" width="22" height="15" viewBox="0 0 22 15" fill="none" stroke="#b8bcc2" stroke-width="1.300"><path d="M13.500 11.300C7 12.500 2 10.500 2 7.800S6 4.200 9.500 4.200s6.500 1.300 6.800 3.300"/><path d="M13.300 6.800h6l-3 4.400z" fill="#b8bcc2" stroke="none"/></svg>
  <svg class="abs" style="left:166px;top:218px" width="16" height="22" viewBox="0 0 16 22" fill="none" stroke="#b8bcc2" stroke-width="1.300"><path d="M8.500 18.500C6 20.500 2.300 17 2.300 11S5 2 6.800 2.500c1.500.5 2.700 4 2.900 8"/><path d="M6.800 9.300h5.800l-2.900 4.500z" fill="#b8bcc2" stroke="none"/></svg>
  <div class="abs" style="left:190px;top:164.0px;width:21px;height:21px;border-radius:50%;background:#e9eaee"></div><div class="abs" style="left:204px;top:172.0px;width:5px;height:5px;border-radius:50%;background:#3e5258"></div><div class="abs" style="left:190px;top:191.0px;width:21px;height:21px;border-radius:50%;background:#e9eaee"></div><div class="abs" style="left:204px;top:199.0px;width:5px;height:5px;border-radius:50%;background:#3e5258"></div><div class="abs" style="left:190px;top:218.0px;width:21px;height:21px;border-radius:50%;background:#e9eaee"></div><div class="abs" style="left:204px;top:226.0px;width:5px;height:5px;border-radius:50%;background:#3e5258"></div>
  <div class="axis abs" style="top:165px">Z</div><div class="axis abs" style="top:192px">Y</div><div class="axis abs" style="top:219px">X</div>
  <div class="ibox abs" style="top:165px">0.0°</div><div class="ibox abs" style="top:192px">0.0°</div><div class="ibox abs" style="top:219px">0.0°</div>
  <div class="abs" style="left:0;top:252px;width:306px;height:1px;background:#343a43"></div>
  <!-- position -->
  <div class="plabel abs" style="top:266px">位置:</div>
  <div class="axis abs" style="top:266px">X</div><div class="axis abs" style="top:293px">Y</div><div class="axis abs" style="top:320px">Z</div>
  <div class="ibox abs" style="top:266px">0.0</div><div class="ibox abs" style="top:293px">0.0</div><div class="ibox abs" style="top:320px">0.0</div>
  <!-- scrollbar -->
  <div class="abs" style="left:307px;top:80px;width:4px;height:249px;background:#54585f"></div>
  <!-- footer header -->
  <div class="abs" style="left:0;top:353px;width:313px;height:32px;background:#181b1f;text-align:center;font-size:16px;line-height:31px;color:#ecedf0">设备帧</div>
  <svg class="abs" style="left:260px;top:362px" width="14" height="15" viewBox="0 0 14 15"><path d="M3.200 5.200A5 5 0 1 1 2 8.500" fill="none" stroke="#e4e6e8" stroke-width="1.400"/><path d="M1 2.200l4.600.6-3.600 3.600z" fill="#e4e6e8"/></svg>
  <svg class="abs" style="left:283px;top:364px" width="12" height="12" viewBox="0 0 12 12"><path d="M1.500 1.500l9 9M10.500 1.500l-9 9" stroke="#f0f0f0" stroke-width="2.800"/></svg>
</div>
<!-- VU meter -->
<div class="abs" style="left:1591px;top:44px;width:10px;height:60px;background:#3a424c;border-radius:2px"></div>
<div class="abs" style="left:1593px;top:48px;width:4px;height:53px;background:repeating-linear-gradient(180deg,rgba(38,44,52,.35) 0,rgba(38,44,52,.35) 1px,rgba(38,44,52,.85) 1px,rgba(38,44,52,.85) 2px),linear-gradient(180deg,#2a2d36 0,#2a2d36 13%,#c97a2b 15%,#c8962c 28%,#8e9238 42%,#48987a 52%,#2a90bc 64%,#2a86c4 100%)"></div>


<div id="play" class="abs">
  <div class="abs" style="left:486.0px;top:16.500px;width:29px;height:29px;border-radius:50%;background:#363d46"><svg class="abs" style="left:5px;top:7px" width="19" height="15" viewBox="0 0 19 15"><path d="M1 7.500L11 1.500v12z" fill="#e6e8ec"/><rect x="13" y="1.500" width="3" height="12" rx="1" fill="#e6e8ec"/></svg></div>
  <div class="abs" style="left:527.0px;top:16.500px;width:29px;height:29px;border-radius:50%;background:#363d46"><svg class="abs" style="left:5px;top:7px" width="19" height="15" viewBox="0 0 19 15"><path d="M18 7.500L8 1.500v12z" fill="#e6e8ec"/><rect x="3" y="1.500" width="3" height="12" rx="1" fill="#e6e8ec"/></svg></div>
  <div class="abs" style="left:566.0px;top:8.500px;width:45px;height:45px;border-radius:50%;background:#363d46"><svg class="abs" style="left:10.500px;top:8.500px" width="26" height="28" viewBox="0 0 26 28"><path d="M2.500 2.500v23c0 .8.600 1 1.200.7L24 14.600c.5-.3.500-.9 0-1.200L3.700 1.800c-.6-.3-1.200-.100-1.200.700z" fill="#e6e8ec"/></svg></div>
  <div class="abs" style="left:621.0px;top:16.500px;width:29px;height:29px;border-radius:50%;background:#363d46"><svg class="abs" style="left:8px;top:7px" width="13" height="15" viewBox="0 0 13 15"><path d="M9 2.500L3.500 7.500 9 12.500" fill="none" stroke="#e6e8ec" stroke-width="2.400" stroke-linecap="round" stroke-linejoin="round"/></svg></div>
  <div class="abs" style="left:660.0px;top:16.500px;width:29px;height:29px;border-radius:50%;background:#363d46"><svg class="abs" style="left:8px;top:7px" width="13" height="15" viewBox="0 0 13 15"><path d="M4 2.500L9.500 7.500 4 12.500" fill="none" stroke="#e6e8ec" stroke-width="2.400" stroke-linecap="round" stroke-linejoin="round"/></svg></div>
  <div class="abs" style="left:715px;top:30px;width:374px;height:5px;border-radius:3px;background:#181b1f"></div>
  <div class="abs" style="left:715px;top:30px;width:118px;height:5px;border-radius:3px;background:#4b5b60"></div>
  <div class="abs" style="left:825.500px;top:26px;width:13px;height:13px;border-radius:50%;background:#e9eaee"></div>
  <div class="abs" style="left:1105px;top:19px;width:132px;height:26px;background:#181b1f;border-radius:3px"></div>
  <div class="abs" style="left:1193px;top:21px;width:42px;height:22px;background:#22262e;border-radius:2px"></div>
  <div class="abs" style="left:1113px;top:24px;font-size:12px;line-height:20px;color:#ecedf0;white-space:nowrap;letter-spacing:-.1px;word-spacing:.8px">00:25 / 01:22</div>
  <div class="abs" style="left:1200px;top:23.500px;font-size:12px;line-height:20px;color:#ecedf0;white-space:nowrap;letter-spacing:-.2px">30fps</div>
  <div class="abs" style="left:1501px;top:17px;width:82px;height:29px;background:#739b21;border-radius:3px">
    <svg class="abs" style="left:16px;top:6px" width="18" height="18" viewBox="0 0 18 18"><g fill="#fff"><circle cx="9" cy="9" r="6.400"/><g id="teeth"><rect x="7.200" y="0.300" width="3.600" height="17.400" rx=".8"/><rect x="7.200" y="0.300" width="3.600" height="17.400" rx=".8" transform="rotate(45 9 9)"/><rect x="7.200" y="0.300" width="3.600" height="17.400" rx=".8" transform="rotate(90 9 9)"/><rect x="7.200" y="0.300" width="3.600" height="17.400" rx=".8" transform="rotate(135 9 9)"/></g></g><circle cx="9" cy="9" r="3" fill="#739b21"/></svg>
    <div class="abs" style="left:40px;top:4px;font-size:13px;line-height:20px;color:#fff">属性</div>
  </div>
  <div class="abs" style="left:0;top:63px;width:1600px;height:1px;background:#191c21"></div>
</div>


<div id="tl" class="abs">
  <!-- toolbar -->
  <div class="abs" style="left:0;top:0;width:1600px;height:26px;background:#22262e"></div>
  <div class="vs abs" style="left:27px"></div><div class="vs abs" style="left:55px"></div><div class="vs abs" style="left:82px"></div><div class="vs abs" style="left:110px"></div><div class="vs abs" style="left:137px"></div><div class="vs abs" style="left:165px"></div>
  <svg class="abs" style="left:0;top:0" width="400" height="26" viewBox="0 0 400 26">
    <!-- undo -->
    <g transform="translate(1.500 0)"><path d="M10 11.500h5.500c3 0 4.500 2 4.500 4s-1 3.500-2.500 4" fill="none" stroke="#f0f0f0" stroke-width="2"/><path d="M12.500 6.500v10l-5.500-5z" fill="#f0f0f0"/></g>
    <!-- redo -->
    <g transform="translate(1 0)"><path d="M45 11.500h-5.500c-3 0-4.500 2-4.500 4s1 3.500 2.500 4" fill="none" stroke="#7a8088" stroke-width="2"/><path d="M42.500 6.500v10l5.500-5z" fill="#7a8088"/></g>
    <!-- cut -->
    <path d="M64.500 5.500l7 11M73 5.500l-7 11" stroke="#f0f0f0" stroke-width="1.600" fill="none"/><circle cx="64.800" cy="18.800" r="2.500" fill="none" stroke="#b8bcc2" stroke-width="1.300"/><circle cx="73" cy="18.800" r="2.500" fill="none" stroke="#b8bcc2" stroke-width="1.300"/>
    <!-- copy -->
    <path d="M90 17.500v-10.500h11" fill="none" stroke="#a8acb2" stroke-width="1.300"/><rect x="92.500" y="9.500" width="11" height="12" rx="1" fill="#f0f0f0"/><path d="M94.500 13h7M94.500 15.500h7M94.500 18h7" stroke="#22262e" stroke-width="1.200"/>
    <!-- paste -->
    <path d="M117.500 9h9v10h-9z" fill="#7a8088"/><path d="M119.500 8.500l2.500-3 2.500 3z" fill="#7a8088"/><rect x="124.500" y="14.500" width="7" height="7.500" rx="1" fill="#7a8088" stroke="#22262e" stroke-width="1"/><path d="M126 17.500h4M126 19.500h4" stroke="#22262e" stroke-width=".8"/>
    <!-- split -->
    <rect x="144" y="8" width="5.500" height="9.500" rx="1" fill="#626a72"/><rect x="154.500" y="8" width="5.500" height="9.500" rx="1" fill="#626a72"/><path d="M152 5.500v14.500" stroke="#626a72" stroke-width="1.300"/>
    <!-- search -->
    <circle cx="202" cy="11.500" r="3.600" fill="none" stroke="#f0f0f0" stroke-width="2"/><path d="M204.800 14.500l4.200 4.500" stroke="#f0f0f0" stroke-width="2.400" stroke-linecap="round"/>
    <!-- minus / plus -->
    <path d="M232.500 13.500h7.500" stroke="#f0f0f0" stroke-width="1.600"/>
    <path d="M369.500 13.500h9M374 9v9" stroke="#f0f0f0" stroke-width="1.600"/>
  </svg>
  <div class="abs" style="left:254px;top:11px;width:103px;height:5px;border-radius:3px;background:#181b1f"></div>
  <div class="abs" style="left:254px;top:11px;width:52px;height:5px;border-radius:3px;background:#4b5b60"></div>
  <div class="abs" style="left:298px;top:7px;width:13px;height:13px;border-radius:50%;background:#e9eaee"></div>
  <div class="abs" style="left:0;top:25px;width:1600px;height:1px;background:#1a1d22"></div>
  <!-- ruler header left -->
  <div class="abs" style="left:0;top:26px;width:84px;height:52px;background:#22262e"></div>
  <div class="abs" style="left:10px;top:32px;width:6px;height:33px;border-radius:3px;background:#181b1f"></div>
  <div class="abs" style="left:10px;top:55px;width:6px;height:10px;border-radius:3px;background:#4b5b60"></div>
  <div class="abs" style="left:9.500px;top:52px;width:7px;height:7px;border-radius:50%;background:#f0f0f0"></div>
  <svg class="abs" style="left:21px;top:35px" width="11" height="28" viewBox="0 0 11 28" fill="#4a5c60"><path d="M5.500 0l2.500 3.500h-1.800v2.500h-1.400v-2.500H3z"/><circle cx="4.500" cy="12.500" r="2.300" fill="none" stroke="#4a5c60" stroke-width="1.200"/><path d="M6.200 14.200l2.800 3" stroke="#4a5c60" stroke-width="1.400"/><path d="M5.500 26l2.500-3.500h-1.800v-2.500h-1.400v2.500H3z"/></svg>
  <div class="abs" style="left:43px;top:29px;width:37px;height:18px;border:1px solid #191c21;border-radius:3px"><svg class="abs" style="left:12px;top:3px" width="10" height="10" viewBox="0 0 10 10"><path d="M0 5h10M5 0v10" stroke="#f0f0f0" stroke-width="1.700"/></svg></div>
  <div class="abs" style="left:43px;top:50px;width:37px;height:18px;border:1px solid #191c21;border-radius:2px"><svg class="abs" style="left:12px;top:4px" width="12" height="8" viewBox="0 0 12 8"><path d="M1.500 1.500L6 6l4.500-4.500" fill="none" stroke="#f0f0f0" stroke-width="1.700"/></svg></div>
  <!-- ruler -->
  <div class="abs" style="left:84px;top:26px;width:1516px;height:13px;background:#181b1f"></div>
  <div class="abs" style="left:84px;top:39px;width:1516px;height:31px;background:#22262e"></div>
  <svg class="abs" style="left:0;top:40px" width="1600" height="19" viewBox="0 0 1600 19" fill="#46555a"><rect x="84.0" y="0" width="1" height="18"/><rect x="96.5" y="0" width="1" height="8"/><rect x="109.0" y="0" width="1" height="8"/><rect x="121.5" y="0" width="1" height="8"/><rect x="134.0" y="0" width="1" height="8"/><rect x="146.5" y="0" width="1" height="14"/><rect x="159.0" y="0" width="1" height="8"/><rect x="171.5" y="0" width="1" height="8"/><rect x="184.0" y="0" width="1" height="8"/><rect x="196.5" y="0" width="1" height="8"/><rect x="209.0" y="0" width="1" height="18"/><rect x="221.5" y="0" width="1" height="8"/><rect x="234.0" y="0" width="1" height="8"/><rect x="246.5" y="0" width="1" height="8"/><rect x="259.0" y="0" width="1" height="8"/><rect x="271.5" y="0" width="1" height="14"/><rect x="284.0" y="0" width="1" height="8"/><rect x="296.5" y="0" width="1" height="8"/><rect x="309.0" y="0" width="1" height="8"/><rect x="321.5" y="0" width="1" height="8"/><rect x="334.0" y="0" width="1" height="18"/><rect x="346.5" y="0" width="1" height="8"/><rect x="359.0" y="0" width="1" height="8"/><rect x="371.5" y="0" width="1" height="8"/><rect x="384.0" y="0" width="1" height="8"/><rect x="396.5" y="0" width="1" height="14"/><rect x="409.0" y="0" width="1" height="8"/><rect x="421.5" y="0" width="1" height="8"/><rect x="434.0" y="0" width="1" height="8"/><rect x="446.5" y="0" width="1" height="8"/><rect x="459.0" y="0" width="1" height="18"/><rect x="471.5" y="0" width="1" height="8"/><rect x="484.0" y="0" width="1" height="8"/><rect x="496.5" y="0" width="1" height="8"/><rect x="509.0" y="0" width="1" height="8"/><rect x="521.5" y="0" width="1" height="14"/><rect x="534.0" y="0" width="1" height="8"/><rect x="546.5" y="0" width="1" height="8"/><rect x="559.0" y="0" width="1" height="8"/><rect x="571.5" y="0" width="1" height="8"/><rect x="584.0" y="0" width="1" height="18"/><rect x="596.5" y="0" width="1" height="8"/><rect x="609.0" y="0" width="1" height="8"/><rect x="621.5" y="0" width="1" height="8"/><rect x="634.0" y="0" width="1" height="8"/><rect x="646.5" y="0" width="1" height="14"/><rect x="659.0" y="0" width="1" height="8"/><rect x="671.5" y="0" width="1" height="8"/><rect x="684.0" y="0" width="1" height="8"/><rect x="696.5" y="0" width="1" height="8"/><rect x="709.0" y="0" width="1" height="18"/><rect x="721.5" y="0" width="1" height="8"/><rect x="734.0" y="0" width="1" height="8"/><rect x="746.5" y="0" width="1" height="8"/><rect x="759.0" y="0" width="1" height="8"/><rect x="771.5" y="0" width="1" height="14"/><rect x="784.0" y="0" width="1" height="8"/><rect x="796.5" y="0" width="1" height="8"/><rect x="809.0" y="0" width="1" height="8"/><rect x="821.5" y="0" width="1" height="8"/><rect x="834.0" y="0" width="1" height="18"/><rect x="846.5" y="0" width="1" height="8"/><rect x="859.0" y="0" width="1" height="8"/><rect x="871.5" y="0" width="1" height="8"/><rect x="884.0" y="0" width="1" height="8"/><rect x="896.5" y="0" width="1" height="14"/><rect x="909.0" y="0" width="1" height="8"/><rect x="921.5" y="0" width="1" height="8"/><rect x="934.0" y="0" width="1" height="8"/><rect x="946.5" y="0" width="1" height="8"/><rect x="959.0" y="0" width="1" height="18"/><rect x="971.5" y="0" width="1" height="8"/><rect x="984.0" y="0" width="1" height="8"/><rect x="996.5" y="0" width="1" height="8"/><rect x="1009.0" y="0" width="1" height="8"/><rect x="1021.5" y="0" width="1" height="14"/><rect x="1034.0" y="0" width="1" height="8"/><rect x="1046.5" y="0" width="1" height="8"/><rect x="1059.0" y="0" width="1" height="8"/><rect x="1071.5" y="0" width="1" height="8"/><rect x="1084.0" y="0" width="1" height="18"/><rect x="1096.5" y="0" width="1" height="8"/><rect x="1109.0" y="0" width="1" height="8"/><rect x="1121.5" y="0" width="1" height="8"/><rect x="1134.0" y="0" width="1" height="8"/><rect x="1146.5" y="0" width="1" height="14"/><rect x="1159.0" y="0" width="1" height="8"/><rect x="1171.5" y="0" width="1" height="8"/><rect x="1184.0" y="0" width="1" height="8"/><rect x="1196.5" y="0" width="1" height="8"/><rect x="1209.0" y="0" width="1" height="18"/><rect x="1221.5" y="0" width="1" height="8"/><rect x="1234.0" y="0" width="1" height="8"/><rect x="1246.5" y="0" width="1" height="8"/><rect x="1259.0" y="0" width="1" height="8"/><rect x="1271.5" y="0" width="1" height="14"/><rect x="1284.0" y="0" width="1" height="8"/><rect x="1296.5" y="0" width="1" height="8"/><rect x="1309.0" y="0" width="1" height="8"/><rect x="1321.5" y="0" width="1" height="8"/><rect x="1334.0" y="0" width="1" height="18"/><rect x="1346.5" y="0" width="1" height="8"/><rect x="1359.0" y="0" width="1" height="8"/><rect x="1371.5" y="0" width="1" height="8"/><rect x="1384.0" y="0" width="1" height="8"/><rect x="1396.5" y="0" width="1" height="14"/><rect x="1409.0" y="0" width="1" height="8"/><rect x="1421.5" y="0" width="1" height="8"/><rect x="1434.0" y="0" width="1" height="8"/><rect x="1446.5" y="0" width="1" height="8"/><rect x="1459.0" y="0" width="1" height="18"/><rect x="1471.5" y="0" width="1" height="8"/><rect x="1484.0" y="0" width="1" height="8"/><rect x="1496.5" y="0" width="1" height="8"/><rect x="1509.0" y="0" width="1" height="8"/><rect x="1521.5" y="0" width="1" height="14"/><rect x="1534.0" y="0" width="1" height="8"/><rect x="1546.5" y="0" width="1" height="8"/><rect x="1559.0" y="0" width="1" height="8"/><rect x="1571.5" y="0" width="1" height="8"/><rect x="1584.0" y="0" width="1" height="18"/><rect x="1596.5" y="0" width="1" height="8"/></svg>
  <div class="rl abs" style="left:85px">0:00:00;00</div><div class="rl abs" style="left:210px">0:00:10;00</div><div class="rl abs" style="left:335px">0:00:20;00</div><div class="rl abs" style="left:460px">0:00:30;00</div><div class="rl abs" style="left:585px">0:00:40;00</div><div class="rl abs" style="left:710px">0:00:50;00</div><div class="rl abs" style="left:835px">0:01:00;00</div><div class="rl abs" style="left:960px">0:01:10;00</div><div class="rl abs" style="left:1085px">0:01:20;00</div><div class="rl abs" style="left:1210px">0:01:30;00</div><div class="rl abs" style="left:1335px">0:01:40;00</div><div class="rl abs" style="left:1460px">0:01:50;00</div><div class="rl abs" style="left:1585px">0:02:00;00</div>
  <div class="abs" style="left:0;top:70px;width:1600px;height:1px;background:#191c21"></div>
  <div class="abs" style="left:0;top:71px;width:84px;height:7px;background:#262b34"></div>
  <div class="abs" style="left:84px;top:71px;width:1516px;height:7px;background:#22272e"></div>
  <svg class="abs" style="left:590px;top:71px" width="8" height="7" viewBox="0 0 8 7"><path d="M.5 0h7.500L.5 7z" fill="#3aa0e8"/></svg>
  <svg class="abs" style="left:887px;top:71px" width="8" height="7" viewBox="0 0 8 7"><path d="M.5 0h7.500L.5 7z" fill="#38b058"/></svg>
  <!-- track headers -->
  <div class="abs" style="left:0;top:78px;width:84px;height:245px;background:#353c46"></div>
  <div class="abs" style="left:0;top:323px;width:84px;height:17px;background:#232730"></div>
  <div class="abs" style="left:0;top:162px;width:1600px;height:1px;background:#2a2f37"></div>
  <div class="abs" style="left:0;top:299px;width:1600px;height:1px;background:#2a2f37"></div>
  <div class="abs" style="left:83px;top:78px;width:1px;height:245px;background:#2a2f37"></div>
  <div class="abs" style="left:0;top:162px;width:83px;height:1px;background:#23272e"></div><div class="abs" style="left:0;top:299px;width:83px;height:1px;background:#23272e"></div><div class="tn abs" style="top:84px">轨道 4</div>
  <div class="tn abs" style="top:220px">轨道 3</div>
  <svg class="abs" style="left:64px;top:80px" width="14" height="30" viewBox="0 0 14 30"><path d="M.5 5.500C3 1 11 1 13.500 5.500 11 10 3 10 .5 5.500z" fill="#252930"/><circle cx="7" cy="5.300" r="2.200" fill="#353c46"/><path d="M5.500 20v-2.500a2.500 2.500 0 0 1 5 0" fill="none" stroke="#252930" stroke-width="1.400"/><rect x="4" y="20" width="8" height="7" rx="1" fill="#252930"/><rect x="7" y="22.500" width="2" height="2.500" fill="#353c46"/></svg>
  <svg class="abs" style="left:64px;top:216px" width="14" height="30" viewBox="0 0 14 30"><path d="M.5 5.500C3 1 11 1 13.500 5.500 11 10 3 10 .5 5.500z" fill="#252930"/><circle cx="7" cy="5.300" r="2.200" fill="#353c46"/><path d="M5.500 20v-2.500a2.500 2.500 0 0 1 5 0" fill="none" stroke="#252930" stroke-width="1.400"/><rect x="4" y="20" width="8" height="7" rx="1" fill="#252930"/><rect x="7" y="22.500" width="2" height="2.500" fill="#353c46"/></svg>
  <!-- clips track 4 -->
  <div class="abs" style="left:216px;top:78px;width:102px;height:83px;background:#363e47;border-radius:0 0 5px 5px;overflow:hidden;border-bottom:2px solid #4e6169">
    <svg class="abs" style="left:0;top:0" width="102" height="83" viewBox="0 0 102 83"><path d="M0.0 83.0 L0.5 6.5 L1.7 11.1 L2.9 13.5 L4.1 6.8 L5.3 6.5 L6.5 3.0 L7.7 11.9 L8.9 3.7 L10.1 14.8 L11.3 14.1 L12.5 15.7 L13.7 14.0 L14.9 4.0 L16.1 10.3 L17.3 8.5 L18.5 14.9 L19.7 9.7 L20.9 2.8 L22.1 21.8 L23.3 43.4 L24.5 65.0 L25.7 67.4 L26.9 65.6 L28.1 66.3 L29.3 68.0 L30.5 65.2 L31.7 66.6 L32.9 67.6 L34.1 64.9 L35.3 66.1 L36.5 64.8 L37.7 64.2 L38.9 67.8 L40.1 68.4 L41.3 67.5 L42.5 66.9 L43.7 68.2 L44.9 66.4 L46.1 64.3 L47.3 67.2 L48.5 68.1 L49.7 65.9 L50.9 64.1 L52.1 60.8 L53.3 64.3 L54.5 64.6 L55.7 66.0 L56.9 64.4 L58.1 66.7 L59.3 68.1 L60.5 65.4 L61.7 65.8 L62.9 68.8 L64.1 64.9 L65.3 65.2 L66.5 66.9 L67.7 64.0 L68.9 65.8 L70.1 68.8 L71.3 66.6 L72.5 63.4 L73.7 68.5 L74.9 68.4 L76.1 66.0 L77.3 64.5 L78.5 60.3 L79.7 65.0 L80.9 61.7 L82.1 64.0 L83.3 64.5 L84.5 64.1 L85.7 67.1 L86.9 65.3 L88.1 65.8 L89.3 68.2 L90.5 66.3 L91.7 60.4 L92.9 65.7 L94.1 68.1 L95.3 64.1 L96.5 66.6 L97.7 62.7 L98.9 13.3 L100.1 17.8 L101.3 16.6 L102.0 83.0z" fill="#566b73"/><path d="M46 80l5-6 5 6z" fill="#e8eaec"/></svg>
    <div class="abs" style="left:17px;top:5px;font-size:15px;line-height:18px;color:#e8eaec;-webkit-text-stroke:.3px #e8eaec">3</div>
  </div>
  <div class="abs" style="left:319px;top:78px;width:102px;height:83px;background:#363e47;border-radius:0 0 5px 5px;overflow:hidden">
    <svg class="abs" style="left:0;top:0" width="102" height="83" viewBox="0 0 102 83"><path d="M0.0 83.0 L0.5 8.3 L1.6 15.3 L2.7 8.9 L3.8 9.0 L4.9 4.0 L6.0 10.9 L7.1 9.3 L8.2 16.7 L9.3 14.7 L10.4 20.3 L11.5 12.5 L12.6 16.2 L13.7 14.0 L14.8 18.9 L15.9 13.3 L17.0 4.0 L18.1 3.8 L19.2 10.1 L20.3 6.3 L21.4 19.2 L22.5 7.9 L23.6 9.0 L24.7 16.3 L25.8 9.1 L26.9 9.2 L28.0 5.6 L29.1 10.5 L30.2 13.5 L31.3 3.4 L32.4 19.3 L33.5 9.4 L34.6 7.9 L35.7 16.9 L36.8 2.1 L37.9 7.8 L39.0 10.4 L40.1 9.8 L41.2 3.9 L42.3 4.6 L43.4 7.3 L44.5 15.8 L45.6 10.2 L46.7 6.1 L47.8 10.1 L48.9 10.3 L50.0 6.8 L51.1 2.2 L52.2 13.6 L53.3 19.2 L54.4 6.3 L55.5 7.0 L56.6 6.7 L57.7 19.1 L58.8 7.0 L59.9 4.5 L61.0 6.6 L62.1 8.8 L63.2 6.0 L64.3 6.5 L65.4 8.2 L66.5 6.8 L67.6 10.5 L68.7 9.9 L69.8 4.3 L70.9 10.5 L72.0 13.2 L73.1 16.0 L74.2 14.2 L75.3 8.0 L76.4 20.1 L77.5 8.4 L78.6 3.3 L79.7 10.7 L80.8 10.6 L81.9 6.4 L83.0 19.5 L84.1 5.9 L85.2 5.1 L86.3 4.9 L87.4 2.2 L88.5 16.0 L89.6 5.0 L90.7 16.6 L91.8 10.9 L92.9 20.7 L94.0 14.4 L95.1 9.0 L96.2 3.2 L97.3 10.2 L98.4 14.3 L99.5 10.3 L100.6 18.3 L101.7 2.5 L102.0 83.0z" fill="#566b73"/></svg>
    <div class="abs" style="left:16px;top:5px;font-size:15.500px;line-height:18px;color:rgba(190,200,205,.45);font-weight:bold;white-space:nowrap">Rec 07-30-19</div>
  </div>
  <!-- clip track 3 -->
  <div class="abs" style="left:404px;top:164px;width:102px;height:133px;background:#363d45;border:1.500px solid #d0a32c;border-radius:6px;overflow:hidden">
    <div class="abs" style="left:0;top:126px;width:100px;height:5px;background:#3f464f"></div>
    <svg class="abs" style="left:41px;top:117px" width="18" height="14" viewBox="0 0 18 14"><path d="M0 10c1-10 17-10 18 0z" fill="#3f464f"/><path d="M5 12.500l4-5.500 4 5.500z" fill="#e0e2e6"/></svg>
    <svg class="abs" style="left:6.500px;top:38.500px" width="85.500" height="48"><use href="#page" width="85.500" height="48"/></svg>
  </div>
  <!-- playhead -->
  <div class="abs" style="left:403px;top:43px;width:2px;height:280px;background:linear-gradient(90deg,#788c96 0,#788c96 50%,#a6b8c0 50%,#a6b8c0 100%)"></div>
  <svg class="abs" style="left:382px;top:27px" width="43" height="21" viewBox="0 0 43 21"><rect x="0" y="0" width="11" height="12" rx="1.500" fill="#6da02c"/><rect x="32" y="0" width="11" height="12" rx="1.500" fill="#b6242a"/><path d="M3.500 2v8M5.500 2v8" stroke="#5a8a22" stroke-width="1"/><path d="M37.500 2v8M39.500 2v8" stroke="#961c20" stroke-width="1"/><path d="M10.500 .5h22.500v10.500L21.700 20 10.500 11z" fill="#57858f" stroke="#86aab3" stroke-width="1"/></svg>
  <div class="rl abs" style="left:427.500px;top:24px;letter-spacing:-.13px">0:00:25;16</div>
  <!-- scrollbars -->
  <div class="abs" style="left:84px;top:327px;width:1498px;height:10px;background:#2b3038"></div><div class="abs" style="left:0;top:337px;width:1600px;height:3px;background:#14171a"></div>
  <div class="abs" style="left:1595px;top:264px;width:3px;height:28px;background:#5a7078"></div>
  <div class="abs" style="left:0;top:339px;width:1600px;height:1px;background:#0c0e11"></div>
</div>

<!-- IME tooltip & bar -->
<div class="abs" style="left:842px;top:771px;width:129px;height:30px;background:#fff;font-size:12px;line-height:28px;color:#333;padding-left:8px;white-space:nowrap;letter-spacing:.45px">个性设置，点我看看</div>
<svg class="abs" style="left:851px;top:800px" width="10" height="6" viewBox="0 0 10 6"><path d="M0 0h10L5 5.500z" fill="#fff"/></svg>
<div class="abs" style="left:864px;top:808px;width:191px;height:25px;background:#fff"></div>
<svg class="abs" style="left:841px;top:804px" width="32" height="31" viewBox="0 0 32 31"><rect x="3" y="3" width="25" height="25" rx="2.500" fill="#f2541b" transform="rotate(-13 15.500 15.500)"/><text x="15.500" y="23.500" font-family="Liberation Sans,sans-serif" font-weight="bold" font-style="italic" font-size="22" fill="#fff" text-anchor="middle" transform="rotate(-8 15.500 15.500)">S</text></svg>
<div class="abs" style="left:875px;top:810.500px;font-size:17px;line-height:24px;color:#2878d0;font-weight:bold">中</div>
<svg class="abs" style="left:898px;top:808px" width="160" height="25" viewBox="0 0 160 25">
  <g fill="none" stroke="#2878d0" stroke-width="1.600">
    <circle cx="5.500" cy="11" r="1.500" stroke-width="1.100"/>
    <path d="M11.500 12.500c1 1.200.6 3-1 4.200" stroke-width="1.800" stroke-linecap="round"/>
    <circle cx="31.500" cy="12.400" r="7.300"/><path d="M27.800 14c1.500 2.800 6 2.800 7.500 0" stroke-width="1.300"/><path d="M29.500 9v2.500M33.500 9v2.500" stroke-width="1.500"/>
    <path d="M50.500 12.500c0 5 8.500 5 8.500 0M54.700 16.500v3.500M51.500 20.200h6.500" stroke-width="1.400"/>
    <rect x="69.500" y="7.500" width="15.500" height="10.500" rx="1.500"/>
  </g>
  <rect x="52.200" y="4.500" width="5" height="10" rx="2.500" fill="#2878d0"/>
  <g fill="#2878d0"><rect x="71.500" y="10" width="1.600" height="1.600"/><rect x="74.300" y="10" width="1.600" height="1.600"/><rect x="77.100" y="10" width="1.600" height="1.600"/><rect x="79.900" y="10" width="1.600" height="1.600"/><rect x="82" y="10" width="1.400" height="1.600"/><rect x="71.500" y="12.500" width="1.600" height="1.600"/><rect x="74.300" y="12.500" width="1.600" height="1.600"/><rect x="77.100" y="12.500" width="1.600" height="1.600"/><rect x="79.900" y="12.500" width="1.600" height="1.600"/><rect x="73.500" y="15" width="7.500" height="1.500"/></g>
  <g fill="#a8bcd8"><circle cx="99" cy="8.500" r="3"/><path d="M93 18c0-5 3-6.500 6-6.500 2 0 3.500.7 4.500 2h-4v6H93z"/><rect x="100.500" y="14.500" width="6" height="6" fill="none" stroke="#a8bcd8" stroke-width="1"/></g>
  <path d="M117.500 5.500l-5 3 1.800 3.200 1.700-1v9.300h11v-9.300l1.700 1 1.800-3.200-5-3c-1.500 1.800-6.500 1.800-8 0z" fill="#2878d0"/>
  <g fill="#2878d0"><rect x="137.500" y="5.500" width="6" height="6" rx="1"/><rect x="137.500" y="13" width="6" height="6" rx="1"/><rect x="145" y="13" width="6" height="6" rx="1"/><rect x="145.700" y="6.200" width="4.600" height="4.600" rx="1" fill="none" stroke="#2878d0" stroke-width="1.400"/></g>
</svg>
<!-- taskbar strip -->
<div class="abs" style="left:0;top:857px;width:1600px;height:9px;background:#181c26"></div>
<div class="abs" style="left:329px;top:857px;width:32px;height:9px;background:#3d7a3d"></div>
<div class="abs" style="left:361px;top:857px;width:11px;height:9px;background:#3a3d44"></div>
<div class="abs" style="left:738px;top:857px;width:51px;height:9px;background:#4a4c52"></div>
<div class="abs" style="left:1595px;top:858px;width:1px;height:8px;background:#9a9ca0"></div><div class="abs" style="left:1491px;top:865px;width:5px;height:1px;background:#c8c8c8"></div><div class="abs" style="left:1499px;top:865px;width:4px;height:1px;background:#c8c8c8"></div><div class="abs" style="left:1511px;top:865px;width:2px;height:1px;background:#c8c8c8"></div><div class="abs" style="left:1516px;top:865px;width:5px;height:1px;background:#c8c8c8"></div>
<div class="abs" style="left:1598.5px;top:0;width:1.5px;height:866px;background:#14171a"></div><div class="abs" style="left:0;top:0;width:1px;height:857px;background:#111316"></div>

</div>
</body>
</html>
